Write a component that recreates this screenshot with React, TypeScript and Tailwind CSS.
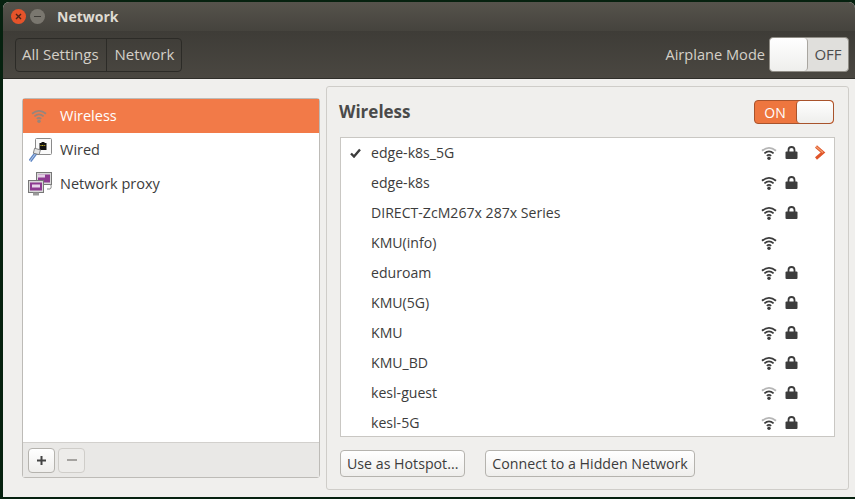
const networks = [
  { name: "edge-k8s_5G", active: true, weak: true, lock: true },
  { name: "edge-k8s", lock: true },
  { name: "DIRECT-ZcM267x 287x Series", lock: true },
  { name: "KMU(info)", lock: false },
  { name: "eduroam", lock: true },
  { name: "KMU(5G)", lock: true },
  { name: "KMU", lock: true },
  { name: "KMU_BD", lock: true },
  { name: "kesl-guest", weak: true, lock: true },
  { name: "kesl-5G", weak: true, lock: true },
];

function WifiIcon({ weak, color = "#3c3c3c" }: { weak?: boolean; color?: string }) {
  return (
    <svg width="16" height="14" viewBox="0 0 16 14" fill="none">
      <path d="M1 4.8 Q8 -1 15 4.8" stroke={weak ? "#b5b5b5" : color} strokeWidth="1.8" />
      <path d="M3.4 7.4 Q8 3.4 12.6 7.4" stroke={color} strokeWidth="1.8" />
      <path d="M5.8 9.8 Q8 8 10.2 9.8" stroke={color} strokeWidth="1.7" />
      <circle cx="8" cy="12.3" r="1.7" fill={color} />
    </svg>
  );
}

function LockIcon() {
  return (
    <svg width="13" height="13" viewBox="0 0 13 13" fill="none">
      <path d="M3.5 6V4a3 3 0 0 1 6 0v2" stroke="#3c3c3c" strokeWidth="1.8" />
      <rect x="0.5" y="5.5" width="12" height="7.5" rx="1" fill="#3c3c3c" />
    </svg>
  );
}

function WiredIcon() {
  return (
    <svg width="24" height="24" viewBox="0 0 24 24" fill="none">
      <rect x="6.5" y="0.5" width="16" height="16" rx="1" fill="#fafafa" stroke="#8a8a8a" />
      <path d="M10.5 5h2V4h3v1h2v7h-7z" fill="#111" />
      <path d="M11.5 7.5h5" stroke="#d9c32a" strokeWidth="1.2" strokeDasharray="1 0.6" />
      <path d="M1 23 L7 15" stroke="#5f86c4" strokeWidth="3.4" />
      <path d="M1 23 L7 15" stroke="#b9cdea" strokeWidth="1" />
      <rect x="5" y="11" width="6" height="5" transform="rotate(15 8 13)" fill="#e4e4e4" stroke="#777" strokeWidth="0.8" />
    </svg>
  );
}

function ProxyIcon() {
  return (
    <svg width="24" height="24" viewBox="0 0 24 24" fill="none">
      <rect x="8.5" y="0.5" width="15" height="12" fill="#d8d8d8" stroke="#777" />
      <rect x="10" y="2.5" width="12" height="8" fill="#8d3a91" />
      <rect x="10" y="2.5" width="7" height="3" fill="#e4cfe6" />
      <path d="M19 17h3c1.6 0 1.6-4.5 0-5" stroke="#888" strokeWidth="1" />
      <rect x="0.5" y="8.5" width="15" height="12" fill="#d8d8d8" stroke="#777" />
      <rect x="2" y="10.5" width="12" height="8" fill="#8d3a91" />
      <rect x="4" y="12.5" width="8" height="3" fill="#e8d5ea" />
      <rect x="5" y="20.5" width="6" height="3" fill="#9a9a9a" />
    </svg>
  );
}

export default function App() {
  return (
    <div
      className="h-[499px] w-[855px] overflow-hidden bg-[#06210f] pl-[3px] pt-[2px] text-[14px] text-[#3c3c3c]"
      style={{ fontFamily: '"Open Sans", "Noto Sans", sans-serif' }}
    >
      <div className="flex h-[495px] flex-col overflow-hidden rounded-t-[6px] bg-[#f0efed]">
        <div className="flex h-[29px] shrink-0 items-center bg-gradient-to-b from-[#56534c] to-[#45433d] pl-[8px]">
          <div className="flex h-[15px] w-[15px] items-center justify-center rounded-full bg-[#e5532a]">
            <svg width="7" height="7" viewBox="0 0 7 7"><path d="M1 1l5 5M6 1l-5 5" stroke="#4d2417" strokeWidth="1.4" /></svg>
          </div>
          <div className="ml-[4px] flex h-[15px] w-[15px] items-center justify-center rounded-full bg-[#7a776f]">
            <div className="h-[1.5px] w-[7px] bg-[#3e3c37]" />
          </div>
          <span className="ml-[12px] text-[14px] font-bold text-[#dfdbd2]">Network</span>
        </div>

        <div className="flex h-[48px] shrink-0 items-center justify-between border-b border-[#2f2e2a] bg-gradient-to-b from-[#3e3c37] to-[#4a4741] pl-[12px] pr-[6px] text-[15px]">
          <div className="flex h-[34px] rounded-[4px] border border-[#2c2b27] text-[#d4d0c8]">
            <div className="flex items-center border-r border-[#2c2b27] pl-[6px] pr-[7px]">All Settings</div>
            <div className="flex items-center pl-[8px] pr-[7px]">Network</div>
          </div>
          <div className="flex items-center gap-[4px]">
            <span className="text-[14.6px] text-[#d4d0c8]">Airplane Mode</span>
            <div className="flex h-[35px] w-[80px] overflow-hidden rounded-[4px] border border-[#8f8c85] bg-[#e0dfdc]">
              <div className="w-[38px] rounded-[4px] border-r border-[#a9a6a0] bg-gradient-to-b from-white to-[#eeeeec]" />
              <span className="flex flex-1 items-center justify-center text-[#4c4c4c]">OFF</span>
            </div>
          </div>
        </div>

        <div className="flex min-h-0 flex-1 pb-[7px] pl-[19px] pr-[6px] pt-[7px]">
          <div className="mb-[12px] mt-[12px] flex w-[298px] shrink-0 flex-col rounded-[3px] border border-[#bdbbb7] bg-white text-[14.5px]">
            <div className="flex-1">
              <div className="flex h-[34px] items-center bg-[#f27a48] pb-[1px] pl-[8px] text-white">
                <WifiIcon color="#96857c" />
                <span className="ml-[13px]">Wireless</span>
              </div>
              <div className="flex h-[34px] items-center pl-[6px]">
                <WiredIcon />
                <span className="ml-[7px] pb-[1px]">Wired</span>
              </div>
              <div className="flex h-[34px] items-center pl-[5px]">
                <ProxyIcon />
                <span className="ml-[8px] pb-[1px]">Network proxy</span>
              </div>
            </div>
            <div className="flex h-[35px] shrink-0 items-center gap-[3px] border-t border-[#d2d0cd] bg-[#e9e8e6] pl-[5px]">
              <button className="flex h-[25px] w-[27px] items-center justify-center rounded-[4px] border border-[#b5b3ae] bg-gradient-to-b from-white to-[#efeeec]">
                <svg width="11" height="11" viewBox="0 0 11 11"><path d="M5.5 1v9M1 5.5h9" stroke="#444" strokeWidth="2" /></svg>
              </button>
              <button className="flex h-[25px] w-[27px] items-center justify-center rounded-[4px] border border-[#cfcdc9] bg-[#edecea]">
                <div className="h-[2px] w-[10px] bg-[#a5a3a0]" />
              </button>
            </div>
          </div>

          <div className="ml-[6px] flex flex-1 flex-col rounded-[3px] border border-[#cfcdc9] px-[13px]">
            <div className="flex h-[50px] shrink-0 items-center justify-between">
              <span className="-ml-[1px] text-[17px] font-bold text-[#4a4a4a]">Wireless</span>
              <div className="mr-[1px] flex h-[24px] w-[80px] overflow-hidden rounded-[4px] border border-[#a8532c] bg-[#ee763f]">
                <span className="flex w-[41px] items-center justify-center pr-[1px] text-white">ON</span>
                <div className="flex-1 rounded-[4px] border-l border-[#a8532c] bg-gradient-to-b from-white to-[#eeeeec]" />
              </div>
            </div>
            <div className="h-[300px] shrink-0 border border-[#c9c7c3] bg-white text-[14.1px]">
              {networks.map((n) => (
                <div key={n.name} className="flex h-[30px] items-center pb-[1px]">
                  <div className="flex w-[30px] shrink-0 justify-center pr-[1px]">
                    {n.active && (
                      <svg width="11" height="10" viewBox="0 0 11 10"><path d="M1 5.5l3 3L10 1.5" stroke="#3c3c3c" strokeWidth="2.4" fill="none" /></svg>
                    )}
                  </div>
                  <span className="flex-1">{n.name}</span>
                  <WifiIcon weak={n.weak} />
                  <div className="ml-[8px] w-[13px]">{n.lock && <LockIcon />}</div>
                  <div className="ml-[16px] mr-[8px] w-[12px]">
                    {n.active && (
                      <svg width="12" height="17" viewBox="0 0 12 17" fill="none">
                        <path d="M2 2.5l7 6L2 14.5" stroke="#e0552a" strokeWidth="3" />
                        <path d="M2 2.5l7 6" stroke="#f2a06e" strokeWidth="1.2" />
                      </svg>
                    )}
                  </div>
                </div>
              ))}
            </div>
            <div className="mt-[13px] flex gap-[20px] text-[14.2px]">
              <button className="flex h-[27px] items-center rounded-[4px] border border-[#b5b3ae] bg-gradient-to-b from-white to-[#efeeec] px-[6px]">Use as Hotspot...</button>
              <button className="flex h-[27px] items-center rounded-[4px] border border-[#b5b3ae] bg-gradient-to-b from-white to-[#efeeec] px-[6px]">Connect to a Hidden Network</button>
            </div>
          </div>
        </div>
      </div>
    </div>
  );
}
